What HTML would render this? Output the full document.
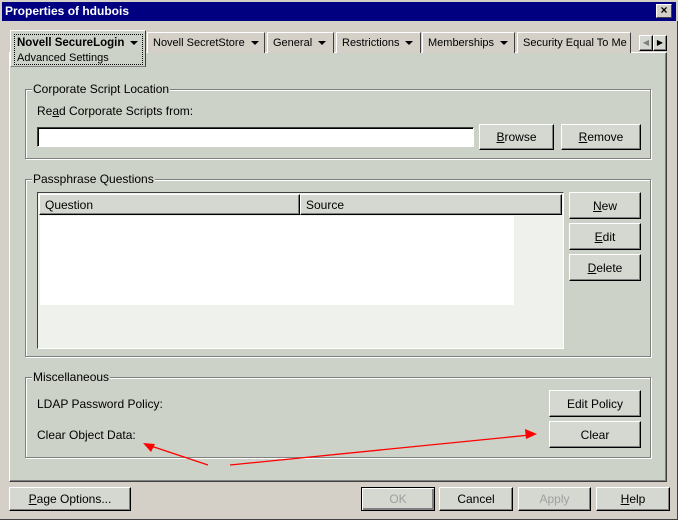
<!DOCTYPE html>
<html><head><style>
*{box-sizing:border-box;margin:0;padding:0}
body{width:678px;height:520px;background:#d4d0c8;font-family:"Liberation Sans",sans-serif;font-size:12px;color:#000;position:relative;overflow:hidden}
.a{position:absolute}
.title{left:0;top:0;width:678px;height:21px;background:#d4d0c8}
.bar{left:2px;top:2px;width:674px;height:19px;background:#000080;color:#fff;font-weight:bold;font-size:12px;line-height:19px;padding-left:3px}
.xb{left:656px;top:4px;width:16px;height:14px;background:#d4d0c8;border:1px solid;border-color:#fff #404040 #404040 #fff;font-size:12px;line-height:11px;text-align:center;font-weight:bold;color:#000}
.panel{left:9px;top:52px;width:658px;height:430px;background:#cdd2c8;border:1px solid;border-color:#fff #404040 #404040 #fff;box-shadow:inset -1px -1px #808080}
.tab{top:32px;height:21px;border:1px solid;border-color:#fff #404040 transparent #fff;border-bottom:none;background:#d4d0c8;line-height:20px;padding-left:5px;font-size:11px}
.tri{display:inline-block;width:0;height:0;border-left:4px solid transparent;border-right:4px solid transparent;border-top:4px solid #000;vertical-align:middle;margin-left:6px}
.grp{border:1px solid #808080;box-shadow:1px 1px #fff, inset 1px 1px #fff}
.lg{background:#cdd2c8;padding:0 1px;font-size:12px;line-height:13px}
.btn{background:#d4d8d0;border:1px solid;border-color:#fff #000 #000 #fff;box-shadow:inset -1px -1px #808080;text-align:center;font-size:12px}
u{text-decoration:underline}
</style></head><body>
<div class="a title"></div>
<div class="a bar">Properties of hdubois</div>
<div class="a xb">×</div>
<div class="a" style="left:0;top:21px;width:678px;height:499px;border-right:1px solid #404040;border-bottom:1px solid #404040"></div>

<div class="a panel"></div>
<div class="a tab" style="left:10px;top:30px;width:136px;height:37px;background:#cdd2c8;border-bottom:1px solid #808080;font-weight:bold;line-height:15px;padding-top:3px;font-size:11.5px">
<div style="border:1px dotted #000;padding:1px 2px 0;height:31px;margin-left:-2px;margin-right:2px;white-space:nowrap">Novell SecureLogin<span class="tri" style="margin-left:6px"></span><br><span style="font-weight:normal;font-size:11px">Advanced Settings</span></div></div>
<div class="a tab" style="left:147px;width:118px">Novell SecretStore<span class="tri"></span></div>
<div class="a tab" style="left:267px;width:67px">General<span class="tri"></span></div>
<div class="a tab" style="left:336px;width:85px">Restrictions<span class="tri"></span></div>
<div class="a tab" style="left:422px;width:93px">Memberships<span class="tri"></span></div>
<div class="a tab" style="left:517px;width:114px;overflow:hidden;white-space:nowrap">Security Equal To Me (</div>
<div class="a btn" style="left:639px;top:35px;width:14px;height:16px;font-size:8px;line-height:13px;color:#808080">◀</div>
<div class="a btn" style="left:653px;top:35px;width:14px;height:16px;font-size:8px;line-height:13px">▶</div>

<div class="a grp" style="left:25px;top:89px;width:626px;height:70px"></div>
<div class="a lg" style="left:32px;top:83px">Corporate Script Location</div>
<div class="a" style="left:37px;top:104px">Re<u>a</u>d Corporate Scripts from:</div>
<div class="a" style="left:37px;top:127px;width:437px;height:20px;background:#fff;border:1px solid;border-color:#404040 #fff #fff #404040;box-shadow:inset 1px 1px #000"></div>
<div class="a btn" style="left:479px;top:124px;width:75px;height:26px;line-height:24px"><u>B</u>rowse</div>
<div class="a btn" style="left:561px;top:124px;width:80px;height:26px;line-height:24px"><u>R</u>emove</div>

<div class="a grp" style="left:25px;top:179px;width:626px;height:178px"></div>
<div class="a lg" style="left:32px;top:173px">Passphrase Questions</div>
<div class="a" style="left:37px;top:192px;width:527px;height:157px;background:#eef1ec;border:1px solid;border-color:#404040 #fff #fff #404040"></div>
<div class="a" style="left:40px;top:216px;width:474px;height:89px;background:#fff"></div>
<div class="a btn" style="left:39px;top:194px;width:261px;height:21px;line-height:20px;text-align:left;padding-left:5px">Question</div>
<div class="a btn" style="left:300px;top:194px;width:262px;height:21px;line-height:20px;text-align:left;padding-left:5px">Source</div>
<div class="a btn" style="left:569px;top:192px;width:72px;height:27px;line-height:26px"><u>N</u>ew</div>
<div class="a btn" style="left:569px;top:223px;width:72px;height:27px;line-height:26px"><u>E</u>dit</div>
<div class="a btn" style="left:569px;top:254px;width:72px;height:27px;line-height:26px"><u>D</u>elete</div>

<div class="a grp" style="left:25px;top:377px;width:626px;height:81px"></div>
<div class="a lg" style="left:32px;top:371px">Miscellaneous</div>
<div class="a" style="left:37px;top:397px">LDAP Password Policy:</div>
<div class="a" style="left:37px;top:428px">Clear Object Data:</div>
<div class="a btn" style="left:549px;top:390px;width:92px;height:27px;line-height:26px">Edit Policy</div>
<div class="a btn" style="left:549px;top:421px;width:92px;height:27px;line-height:26px">Clear</div>

<svg class="a" style="left:0;top:0" width="678" height="520">
<line x1="208" y1="465" x2="148" y2="445" stroke="#f00" stroke-width="1.3"/>
<polygon points="143,443 155,444 151,452" fill="#f00"/>
<line x1="230" y1="465" x2="530" y2="435" stroke="#f00" stroke-width="1.3"/>
<polygon points="537,434 525,429 526,439" fill="#f00"/>
</svg>

<div class="a btn" style="left:9px;top:487px;width:122px;height:24px;line-height:22px"><u>P</u>age Options...</div>
<div class="a btn" style="left:361px;top:487px;width:74px;height:24px;line-height:22px;color:#a0a0a0;border-color:#000;box-shadow:inset 1px 1px #fff,inset -2px -2px #808080">OK</div>
<div class="a btn" style="left:439px;top:487px;width:74px;height:24px;line-height:22px">Cancel</div>
<div class="a btn" style="left:518px;top:487px;width:73px;height:24px;line-height:22px;color:#a0a0a0">Apply</div>
<div class="a btn" style="left:596px;top:487px;width:74px;height:24px;line-height:22px"><u>H</u>elp</div>
</body></html>
